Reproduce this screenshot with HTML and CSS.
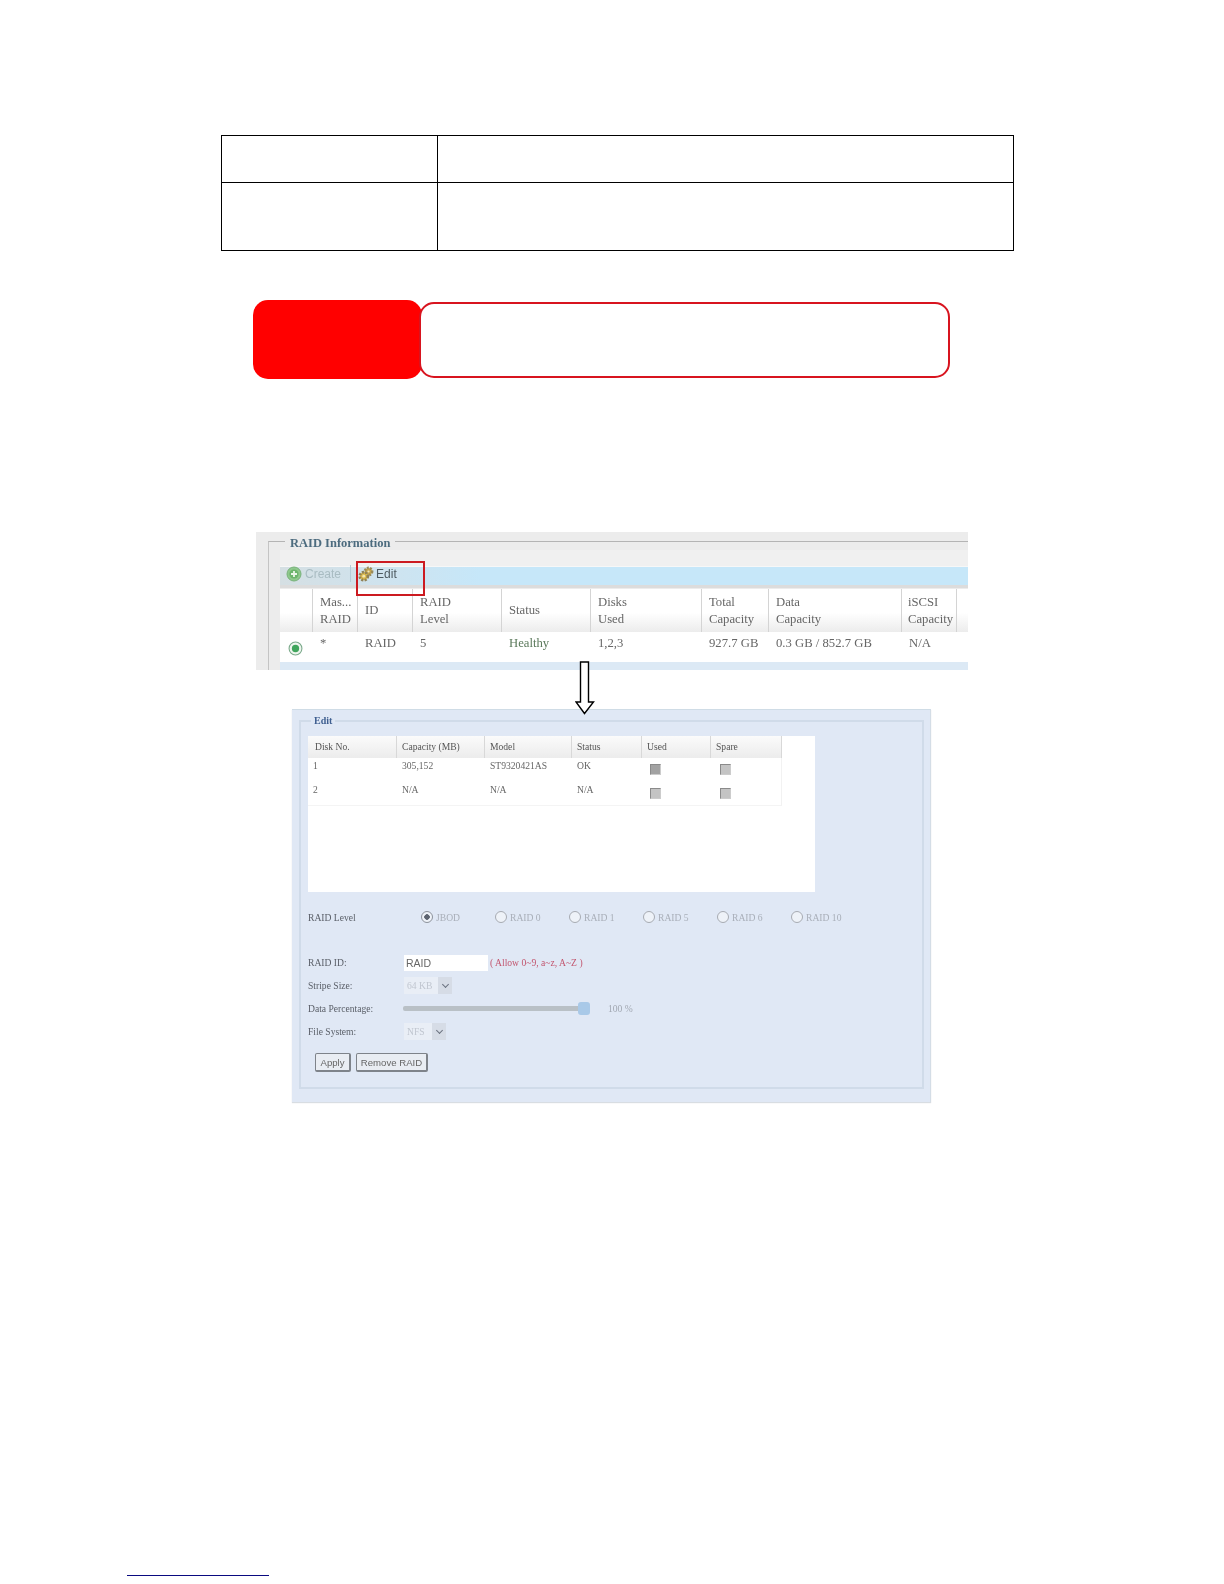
FILE: index.html
```html
<!DOCTYPE html>
<html lang="en">
<head>
<meta charset="utf-8">
<title>RAID</title>
<link rel="stylesheet" href="styles.css">
</head>
<body>
<main class="page">
  <table class="spec">
    <tr class="spec-short"><td class="spec-key"></td><td></td></tr>
    <tr class="spec-tall"><td class="spec-key"></td><td></td></tr>
  </table>

  <div class="callout">
    <div class="callout-tag"></div>
    <div class="callout-body"></div>
  </div>

  <div class="shots">
    <section class="shot-info">
      <fieldset class="info-set">
        <legend class="info-legend">RAID Information</legend>
        <div class="info-band"></div>
        <div class="toolbar">
          <svg class="tool-icon" viewBox="0 0 16 16" aria-hidden="true">
            <circle cx="8" cy="8" r="7" fill="#8ec88c" stroke="#79b27b"/>
            <circle cx="8" cy="8" r="4.6" fill="#6cb56c"/>
            <path d="M8 5v6M5 8h6" stroke="#eaf6e8" stroke-width="1.8"/>
          </svg>
          <span class="tool-off">Create</span>
          <span class="tool-sep"></span>
          <svg class="tool-gear" viewBox="0 0 18 18" aria-hidden="true">
            <circle cx="11.5" cy="6.5" r="3.6" fill="#c9a94f" stroke="#9a8a58" stroke-width="2.6" stroke-dasharray="1.8 1.2"/>
            <circle cx="6.8" cy="11.2" r="4" fill="#dcbb4e" stroke="#8f8158" stroke-width="2.8" stroke-dasharray="2 1.3"/>
            <circle cx="6.8" cy="11.2" r="1.4" fill="#f1e6b4"/>
            <circle cx="11.5" cy="6.5" r="1.1" fill="#efe4bd"/>
          </svg>
          <span class="tool-on">Edit</span>
        </div>
        <div class="info-grid">
          <div class="ih"></div>
          <div class="ih"><span>Mas...<br>RAID</span></div>
          <div class="ih"><span>ID</span></div>
          <div class="ih"><span>RAID<br>Level</span></div>
          <div class="ih"><span>Status</span></div>
          <div class="ih"><span>Disks<br>Used</span></div>
          <div class="ih"><span>Total<br>Capacity</span></div>
          <div class="ih"><span>Data<br>Capacity</span></div>
          <div class="ih ih-last"><span>iSCSI<br>Capacity</span></div>
          <div class="ih ih-end"></div>
          <div class="ic ic-radio"><svg class="big-radio" viewBox="0 0 14 14" aria-hidden="true"><circle cx="7" cy="7" r="6" fill="#eef5ee" stroke="#7aa98a"/><circle cx="7" cy="7" r="3.4" fill="#3fa55c"/></svg></div>
          <div class="ic">*</div>
          <div class="ic">RAID</div>
          <div class="ic">5</div>
          <div class="ic ic-ok">Healthy</div>
          <div class="ic">1,2,3</div>
          <div class="ic">927.7 GB</div>
          <div class="ic">0.3 GB / 852.7 GB</div>
          <div class="ic">N/A</div>
          <div class="ic"></div>
        </div>
      </fieldset>
      <div class="mark-edit"></div>
    </section>

    <svg class="flow-arrow" viewBox="0 0 20 54" aria-hidden="true">
      <path d="M5.5 1H13.5V41H18.5L9.5 52.5L1 41H5.5Z" fill="#fff" stroke="#000" stroke-width="1.4"/>
    </svg>

    <section class="shot-edit">
      <fieldset class="edit-set">
        <legend class="edit-legend">Edit</legend>
        <div class="disk-box">
          <div class="disk-grid">
            <div class="dh dh-first">Disk No.</div>
            <div class="dh">Capacity (MB)</div>
            <div class="dh">Model</div>
            <div class="dh">Status</div>
            <div class="dh">Used</div>
            <div class="dh">Spare</div>
            <div class="dc dc-first">1</div>
            <div class="dc">305,152</div>
            <div class="dc">ST9320421AS</div>
            <div class="dc">OK</div>
            <div class="dc"><span class="check check-on"></span></div>
            <div class="dc dc-last"><span class="check check-spare"></span></div>
            <div class="dc dc-first dc-bottom">2</div>
            <div class="dc dc-bottom">N/A</div>
            <div class="dc dc-bottom">N/A</div>
            <div class="dc dc-bottom">N/A</div>
            <div class="dc dc-bottom"><span class="check"></span></div>
            <div class="dc dc-last dc-bottom"><span class="check check-spare"></span></div>
          </div>
        </div>

        <div class="level-row">
          <span class="f-label">RAID Level</span>
          <div class="level-options">
            <span class="level-opt"><span class="radio radio-on"></span>JBOD</span>
            <span class="level-opt"><span class="radio"></span>RAID 0</span>
            <span class="level-opt"><span class="radio"></span>RAID 1</span>
            <span class="level-opt"><span class="radio"></span>RAID 5</span>
            <span class="level-opt"><span class="radio"></span>RAID 6</span>
            <span class="level-opt"><span class="radio"></span>RAID 10</span>
          </div>
        </div>

        <div class="form-rows">
          <div class="f-row">
            <span class="f-label">RAID ID:</span>
            <span class="f-input">RAID</span>
            <span class="f-hint">( Allow 0~9, a~z, A~Z )</span>
          </div>
          <div class="f-row">
            <span class="f-label">Stripe Size:</span>
            <span class="f-select f-select-wide"><span>64 KB</span><span class="f-caret"></span></span>
          </div>
          <div class="f-row">
            <span class="f-label">Data Percentage:</span>
            <span class="slider"><span class="slider-thumb"></span></span>
            <span class="slider-value">100 %</span>
          </div>
          <div class="f-row">
            <span class="f-label">File System:</span>
            <span class="f-select"><span>NFS</span><span class="f-caret"></span></span>
          </div>
        </div>

        <div class="actions">
          <span class="btn btn-apply">Apply</span>
          <span class="btn btn-remove">Remove RAID</span>
        </div>
      </fieldset>
    </section>
  </div>

  <div class="foot-rule"></div>
</main>
</body>
</html>
```

FILE: styles.css
```css
* { box-sizing: border-box; }
html, body { margin: 0; background: #fff; }
body { height: 1584px; overflow: hidden; font-family: "Liberation Serif", serif; }
.page { display: flex; flex-direction: column; padding-top: 135px; }

.spec { width: 793px; margin-left: 221px; border-collapse: collapse; table-layout: fixed; }
.spec td { border: 1px solid #000; padding: 0; }
.spec-key { width: 216px; }
.spec-short { height: 47px; }
.spec-tall { height: 68px; }

.callout { display: flex; align-items: center; margin: 49px 0 0 253px; }
.callout-tag { width: 169px; height: 79px; background: #f00; border-radius: 15px; }
.callout-body { width: 531px; height: 76px; margin-left: -3px; background: #fff; border: 2px solid #d8141f; border-radius: 15px; }

.shots { position: relative; margin-top: 153px; }

.shot-info { position: relative; width: 712px; height: 138px; margin-left: 256px; padding: 1px 0 0 12px; background: #ececec; overflow: hidden; filter: blur(.45px); }
.info-set { min-width: 0; margin: 0; padding: 0 0 0 11px; border: 0; border-top: 1px solid #b4b4b4; border-left: 1px solid #c4c4c4; }
.info-legend { margin-left: 5px; padding: 0 5px; height: 17px; font-size: 12.5px; line-height: 21px; font-weight: bold; color: #4c6b7e; }
.info-band { height: 17px; background: #f0f0f0; border-bottom: 1px solid #f7f7f7; }
.toolbar { display: flex; align-items: center; height: 21px; padding-bottom: 5px; background: linear-gradient(90deg, #d5dfe3, #cfe3ee 100px, #c6e7f9 200px); border-bottom: 3px solid #dcdcdc; font-family: "Liberation Sans", sans-serif; font-size: 12px; }
.tool-icon { width: 16px; height: 16px; flex: none; margin-left: 6px; }
.tool-gear { width: 18px; height: 18px; flex: none; margin-left: 6px; }
.tool-off { margin-left: 3px; color: #a9bcc2; }
.tool-sep { width: 1px; height: 17px; margin-left: 9px; background: #b5ced9; }
.tool-on { margin-left: 1px; color: #4d5a60; }

.info-grid { display: grid; grid-template-columns: 33px 45px 55px 89px 89px 111px 67px 133px 55px 11px; margin-top: 1px; font-size: 12.7px; color: #666; }
.ih { display: flex; align-items: center; height: 43px; padding: 0 0 0 7px; line-height: 17px; white-space: nowrap; background: linear-gradient(#fff 55%, #ececec); border-right: 1px solid #d4d4d4; }
.ih:first-child { padding: 0; }
.ih-last { padding-left: 6px; }
.ih-end { border: 0; }
.ic { height: 30px; padding: 4px 0 0 7px; line-height: 14px; background: #fff; white-space: nowrap; }
.ic-radio { padding: 0 0 0 8px; display: flex; align-items: center; }
.ic-ok { color: #5c7a5c; }
.big-radio { width: 15px; height: 15px; margin-top: 3px; }
.info-set::after { content: ""; display: block; height: 8px; background: #dce9f5; }
.mark-edit { position: absolute; left: 100px; top: 29px; width: 69px; height: 35px; border: 2px solid #cc1a20; }

.flow-arrow { position: absolute; left: 575px; top: 129px; width: 20px; height: 54px; z-index: 1; }

.shot-edit { width: 639px; margin: 39px 0 0 292px; padding: 5px 6px 13px 7px; background: #e0e8f5; border-top: 1px solid #cfdce6; border-right: 1px solid #d4dde6; box-shadow: 0 1px 1px #d8dde2; filter: blur(.6px); }
.edit-set { min-width: 0; margin: 0; padding: 9px 7px 15px; border: 2px solid #d0dbe9; }
.edit-legend { margin-left: 3px; padding: 0 3px; height: 12px; font-size: 10px; line-height: 12px; font-weight: bold; color: #3f5f90; }

.disk-box { width: 507px; height: 156px; background: #fff; font-size: 9.6px; color: #666; }
.disk-grid { display: grid; grid-template-columns: 89px 88px 87px 70px 69px 71px; width: 474px; }
.dh { height: 22px; padding-left: 5px; line-height: 22px; background: linear-gradient(#fbfbfb, #ececec); border-right: 1px solid #d8d8d8; color: #555; }
.dh-first, .dc-first { padding-left: 7px; }
.dc { height: 24px; padding: 2px 0 0 5px; line-height: 12px; }
.dc-bottom { border-bottom: 1px solid #f4f4f4; }
.dc-last { border-right: 1px solid #f2f2f2; }
.check { display: block; width: 11px; height: 11px; margin: 4px 0 0 3px; background: #c4c4c4; border: 1px solid #8a8a8a; border-right-color: #ccc; border-bottom-color: #ccc; }
.check-on { background: #a2a2a2; }
.check-spare { margin-left: 4px; }

.f-label { flex: none; width: 96px; font-size: 9.6px; color: #5a5f68; white-space: nowrap; }
.level-row { display: flex; align-items: center; height: 22px; margin-top: 14px; }
.level-options { display: flex; padding-left: 17px; }
.level-opt { display: flex; align-items: center; width: 74px; font-size: 9.6px; color: #a9afb9; white-space: nowrap; }
.radio { flex: none; width: 12px; height: 12px; margin-right: 3px; border: 1.5px solid #a7abb2; border-radius: 50%; background: #eef2f8; }
.radio-on { background: radial-gradient(circle, #5d6470 0 2.5px, #eef2f8 3px); border-color: #8d929b; }

.form-rows { margin-top: 23px; }
.f-row { display: flex; align-items: center; height: 23px; }
.f-input { display: flex; align-items: center; width: 84px; height: 16px; padding-left: 2px; background: #fff; font-family: "Liberation Sans", sans-serif; font-size: 10.5px; color: #666; }
.f-hint { margin-left: 2px; font-size: 9.6px; color: #c2556e; white-space: nowrap; }
.f-select { display: flex; align-items: center; justify-content: space-between; width: 42px; height: 17px; padding-left: 3px; background: #e9eef6; font-size: 9.6px; color: #c0c6d0; }
.f-select-wide { width: 48px; }
.f-caret { display: flex; align-items: center; justify-content: center; width: 14px; height: 17px; background: #d6dce6; }
.f-caret::before { content: ""; width: 4px; height: 4px; margin-top: -2px; border-right: 1.5px solid #6b7280; border-bottom: 1.5px solid #6b7280; transform: rotate(45deg); }
.slider { position: relative; width: 180px; height: 5px; margin-left: -1px; background: #b9c0c6; border-radius: 2px; }
.slider-thumb { position: absolute; right: -7px; top: -4px; width: 12px; height: 13px; background: #a9c9e8; border-radius: 3px; }
.slider-value { margin-left: 25px; font-size: 9.6px; color: #a2a8b2; white-space: nowrap; }

.actions { display: flex; gap: 5px; margin: 10px 0 0 7px; }
.btn { display: flex; align-items: center; justify-content: center; height: 19px; background: #e9edf3; border: 1px solid #7e838a; border-right-width: 2px; border-bottom-width: 2px; border-radius: 2px; font-family: "Liberation Sans", sans-serif; font-size: 9.6px; color: #666; }
.btn-apply { width: 36px; }
.btn-remove { width: 72px; }

.foot-rule { width: 142px; height: 1px; margin: 473px 0 0 127px; background: #0a0a80; }
```
